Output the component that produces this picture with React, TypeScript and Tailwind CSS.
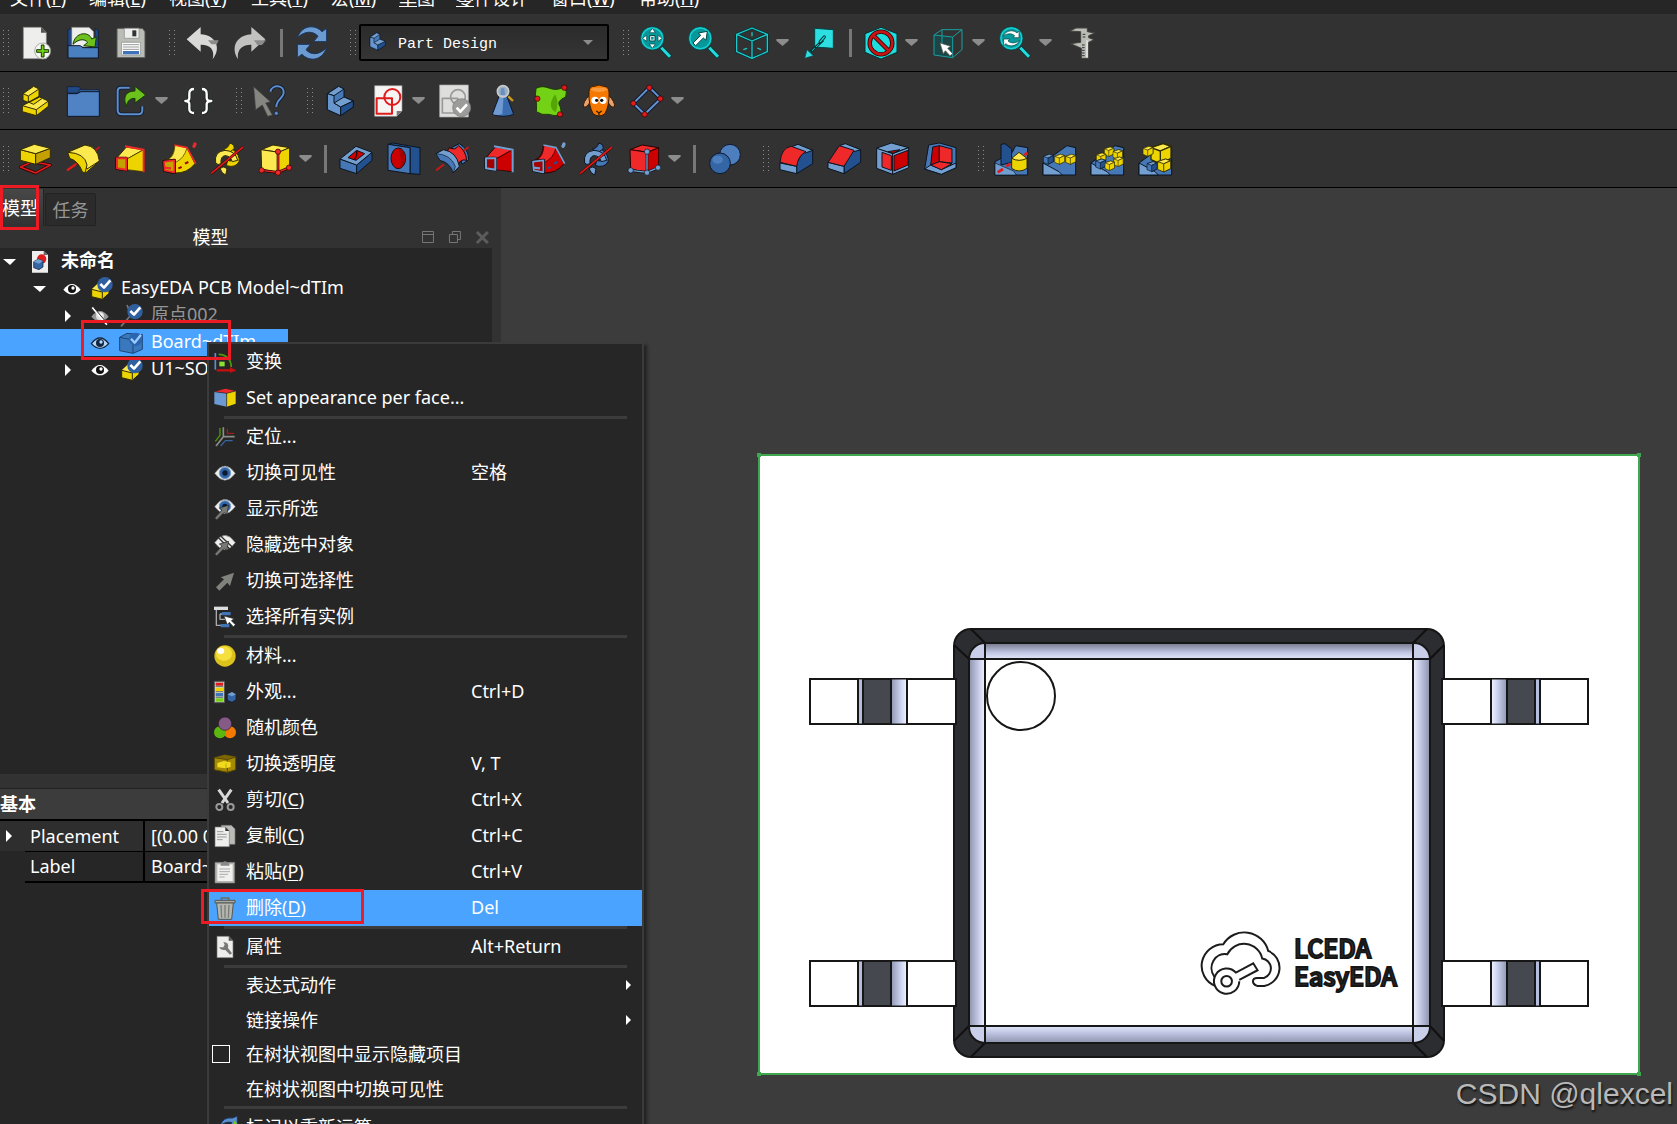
import type { ReactNode } from "react";
import clsx from "clsx";

const INK = "#10182a";
const BLUE = { light: "#729fcf", mid: "#4678b8", dark: "#23508f", ink: "#0b1521" };
const YELLOW = { light: "#fce94f", mid: "#edd400", dark: "#c4a000", ink: "#302b00" };
const RED = { light: "#ef2929", mid: "#cc0000", dark: "#a40000", ink: "#280000" };

type Tone = typeof BLUE;

/* ---------- toolbar icons, drawn on a 96 unit grid ---------- */

function Icon({ children }: { children: ReactNode }) {
  return (
    <svg viewBox="0 0 96 96" className="size-8 overflow-visible" aria-hidden="true">
      <g strokeLinejoin="round">{children}</g>
    </svg>
  );
}

function IconNew() {
  return (
    <Icon>
      <path d="M13 1H66L82 17V95H13Z" fill="#eeeeec" stroke="#888a85" strokeWidth="2" />
      <path d="M66 1L82 17H66Z" fill="#555" />
      <circle cx="71" cy="72" r="24" fill="#f4f4f2" stroke="#888a85" strokeWidth="2" />
      <path d="M67 54H75V68H89V76H75V90H67V76H53V68H67Z" fill="#73d216" stroke="#173a02" strokeWidth="3" />
    </Icon>
  );
}

function IconOpen() {
  return (
    <Icon>
      <path d="M3 8L14 4V50H84V4L94 10V92H3Z" fill="#204a87" stroke={INK} strokeWidth="2" />
      <path d="M14 1H66L80 14V60H14Z" fill="#eeeeec" stroke="#777" strokeWidth="2" />
      <path d="M3 56H40L48 62H94V93H3Z" fill="#4a7fc0" stroke={INK} strokeWidth="3" />
      <path d="M18 52C24 14 66 12 74 36L88 30L84 60L50 56L62 46C52 34 34 36 18 52Z" fill="#6cc11c" stroke="#173a02" strokeWidth="3" />
    </Icon>
  );
}

function IconSave() {
  return (
    <Icon>
      <path d="M9 4H82L90 14V92H6V7Z" fill="#babdb6" stroke="#555753" strokeWidth="3" />
      <path d="M28 4H72V34H28Z" fill="#eee" stroke="#888" strokeWidth="2" />
      <path d="M52 10H64V28H52Z" fill="#333" />
      <path d="M20 46H76V84H20Z" fill="#fff" stroke="#888" strokeWidth="2" />
      <path d="M24 53H72M24 60H72M24 67H72" stroke="#999" strokeWidth="3" />
      <path d="M24 72H72V82H24Z" fill="#3f72b8" />
    </Icon>
  );
}

function IconUndo() {
  return (
    <Icon>
      <path d="M2 37L44 0V22C88 24 108 62 80 97C88 66 70 52 44 53V74Z" fill="#d9dad7" />
      <path d="M66 40H98L92 52H76Z" fill="#8b8b8b" />
    </Icon>
  );
}

function IconRedo() {
  return (
    <Icon>
      <path d="M94 37L52 0V22C8 24 -12 62 12 97C8 66 26 52 52 53V74Z" fill="#c2c3c0" />
      <path d="M60 40H96L84 54H70Z" fill="#8b8b8b" />
    </Icon>
  );
}

function IconRefresh() {
  return (
    <Icon>
      <g fill="#6c9bd2" stroke="#17365f" strokeWidth="3">
        <path d="M4 32C20 -10 60 -6 78 14L92 4V44H52L66 28C52 12 28 10 4 32Z" />
        <path d="M92 62C76 106 36 102 18 82L4 92V52H44L30 68C44 84 68 86 92 62Z" />
      </g>
    </Icon>
  );
}

function Lens({ children }: { children: ReactNode }) {
  return (
    <Icon>
      <path d="M64 62L91 90" stroke="#033" strokeWidth="14" />
      <path d="M64 62L90 89" stroke="#1fdcde" strokeWidth="9" />
      <circle cx="37" cy="34" r="32" fill="#06989a" stroke="#16d0d2" strokeWidth="6" />
      <circle cx="37" cy="34" r="35" fill="none" stroke="#033" strokeWidth="2" />
      {children}
    </Icon>
  );
}

function IconZoomFit() {
  return (
    <Lens>
      <path d="M37 4L46 17H28ZM37 64L46 51H28ZM7 34L20 25V43ZM67 34L54 25V43Z" fill="#fff" stroke="#044" strokeWidth="2" />
      <path d="M29 26H45V42H29Z" fill="#fff" stroke="#044" strokeWidth="3" />
      <path d="M33 30H41V38H33Z" fill="#06989a" />
    </Lens>
  );
}

function IconZoomSelection() {
  return (
    <Lens>
      <path d="M58 13L54 40L46 33L23 56L15 48L38 25L31 18Z" fill="#fff" stroke="#044" strokeWidth="3" />
    </Lens>
  );
}

function IconZoomView() {
  return (
    <Lens>
      <path d="M12 28C22 8 44 8 54 18L60 12V32H42L47 26C38 18 24 18 12 28Z" fill="#fff" stroke="#044" strokeWidth="2" />
      <path d="M62 40C52 60 30 60 20 50L14 56V36H32L27 42C36 50 50 50 62 40Z" fill="#fff" stroke="#044" strokeWidth="2" />
    </Lens>
  );
}

function IconIsoCube() {
  return (
    <Icon>
      <g fill="none" stroke="#033" strokeWidth="8">
        <path d="M48 3L94 22V74L48 94L2 74V22ZM2 22L48 42L94 22M48 42V94" />
      </g>
      <g fill="none" stroke="#1cc8ca" strokeWidth="4">
        <path d="M48 3L94 22V74L48 94L2 74V22ZM2 22L48 42L94 22M48 42V94" />
        <path d="M48 16V28M22 68L33 64M64 63L75 68" />
      </g>
    </Icon>
  );
}

function IconAlign() {
  return (
    <Icon>
      <path d="M35 4L91 8V64L35 60Z" fill="#2ddfe1" stroke="#044" strokeWidth="3" />
      <path d="M60 40L22 76" stroke="#033" strokeWidth="8" />
      <path d="M60 40L22 76" stroke="#16d0d2" strokeWidth="3" strokeDasharray="12 5" />
      <path d="M5 94L12 68L31 86Z" fill="#2ddfe1" stroke="#044" strokeWidth="2" />
      <path d="M52 44L64 30" stroke="#033" strokeWidth="10" strokeLinecap="round" />
      <path d="M52 44L64 30" stroke="#16d0d2" strokeWidth="4" strokeLinecap="round" />
    </Icon>
  );
}

function IconDrawStyle() {
  return (
    <Icon>
      <path d="M48 1L96 20V76L48 96L0 76V20Z" fill="#1fdcde" stroke="#033" strokeWidth="3" />
      <circle cx="48" cy="48" r="34" fill="none" stroke="#2a0000" strokeWidth="13" />
      <path d="M24 24L72 72" stroke="#2a0000" strokeWidth="13" />
      <circle cx="48" cy="48" r="34" fill="none" stroke="#c81414" strokeWidth="8" />
      <path d="M24 24L72 72" stroke="#c81414" strokeWidth="8" />
    </Icon>
  );
}

function IconBoxSelect() {
  return (
    <Icon>
      <path d="M6 24L62 30V92L6 84Z" fill="#1e4546" />
      <path d="M6 24L62 30L90 8M62 30V92M6 24L30 8H90V68L62 92L6 84ZM30 8V62" fill="none" stroke="#189fa1" strokeWidth="3" />
      <path d="M24 48L56 58L47 64L62 80L54 86L40 71L34 80Z" fill="#fff" stroke="#555" strokeWidth="2" />
    </Icon>
  );
}

function IconCaliper() {
  return (
    <Icon>
      <path d="M12 12L30 3H64V14L86 18L68 26V32L84 38L68 46V94H46V64L14 50L44 46V14Z" fill="#babdb6" stroke="#42423f" strokeWidth="3" />
      <path d="M50 22H58M50 30H58M48 54H56M48 62H56M48 70H56M48 78H56M48 86H56" stroke="#333" strokeWidth="3" />
      <path d="M63 40V92" stroke="#fff" strokeWidth="3" />
    </Icon>
  );
}

function IconPart() {
  return (
    <Icon>
      <g stroke={YELLOW.ink} strokeWidth="3">
        <path d="M12 26L44 4L60 12L60 34L28 52L12 46Z" fill={YELLOW.mid} />
        <path d="M12 26L44 4L60 12L28 33Z" fill={YELLOW.light} />
        <path d="M28 33V52" />
        <path d="M10 62L62 36L88 48V64L52 92L10 80Z" fill={YELLOW.mid} />
        <path d="M10 62L30 52L44 58L70 40L88 48L52 74Z" fill={YELLOW.light} />
        <path d="M52 74V92" />
      </g>
    </Icon>
  );
}

function IconGroup() {
  return (
    <Icon>
      <path d="M1 5H36L42 12V24H1Z" fill="#204a87" stroke={INK} strokeWidth="2" />
      <path d="M36 14H96V26H36Z" fill="#35619f" stroke={INK} strokeWidth="2" />
      <path d="M1 26H30L42 20H97V94H1Z" fill="#4f83c4" stroke={INK} strokeWidth="3" />
    </Icon>
  );
}

function IconLink() {
  return (
    <Icon>
      <path d="M44 8H18Q8 8 8 18V76Q8 88 20 88H70Q82 88 82 76V64" fill="none" stroke={INK} strokeWidth="11" />
      <path d="M44 8H18Q8 8 8 18V76Q8 88 20 88H70Q82 88 82 76V64" fill="none" stroke="#5d8fce" strokeWidth="6" />
      <path d="M34 64C22 34 34 18 60 18V4L92 30L60 54V40C46 40 38 46 34 64Z" fill="#6cc11c" stroke="#173a02" strokeWidth="3" />
    </Icon>
  );
}

function IconVarSet() {
  return (
    <Icon>
      <g fill="none" stroke="#1c2624" strokeWidth="12">
        <path d="M36 12Q22 12 22 26V38Q22 48 10 48Q22 48 22 58V72Q22 84 36 84" />
        <path d="M60 12Q74 12 74 26V38Q74 48 88 48Q74 48 74 58V72Q74 84 60 84" />
      </g>
      <g fill="none" stroke="#fff" strokeWidth="7">
        <path d="M36 12Q22 12 22 26V38Q22 48 10 48Q22 48 22 58V72Q22 84 36 84" />
        <path d="M60 12Q74 12 74 26V38Q74 48 88 48Q74 48 74 58V72Q74 84 60 84" />
      </g>
    </Icon>
  );
}

function IconWhatsThis() {
  return (
    <Icon>
      <path d="M2 5L52 50L38 54L58 90L44 94L28 60L8 74Z" fill="#85867f" stroke="#444" strokeWidth="2" />
      <path d="M52 20C58 -4 94 0 92 24C90 42 70 42 70 66" fill="none" stroke={INK} strokeWidth="11" />
      <path d="M52 20C58 -4 94 0 92 24C90 42 70 42 70 66" fill="none" stroke="#5d8fce" strokeWidth="6" />
      <circle cx="70" cy="85" r="6" fill="#5d8fce" stroke={INK} strokeWidth="2" />
    </Icon>
  );
}

function BodyShape() {
  return (
    <g stroke={BLUE.ink} strokeWidth="3">
      <path d="M10 26L44 4L60 12V36L88 48V66L50 92L10 74Z" fill={BLUE.mid} />
      <path d="M10 26L44 4L60 12L30 32Z" fill={BLUE.light} />
      <path d="M10 26L30 32V54L50 66V92L10 74Z" fill="#6795cd" />
      <path d="M30 54L60 36L88 48L50 66Z" fill={BLUE.light} />
      <path d="M50 66L88 48V66L50 92Z" fill={BLUE.dark} />
    </g>
  );
}

function IconBody() {
  return (
    <Icon>
      <BodyShape />
    </Icon>
  );
}

function IconSketch() {
  return (
    <Icon>
      <path d="M8 2H90V78L74 94H8Z" fill="#f5f5f3" stroke="#999" strokeWidth="2" />
      <path d="M90 78H74V94Z" fill="#777" />
      <path d="M14 40H60V86H14Z" fill="none" stroke="#e01b1b" strokeWidth="6" />
      <circle cx="61" cy="36" r="24" fill="none" stroke="#e01b1b" strokeWidth="6" />
    </Icon>
  );
}

function IconSketchCheck() {
  return (
    <Icon>
      <path d="M2 0H88V96H2Z" fill="#dededc" stroke="#aaa" strokeWidth="2" />
      <path d="M10 40H56V84H10Z" fill="none" stroke="#999" strokeWidth="5" />
      <circle cx="57" cy="36" r="22" fill="none" stroke="#999" strokeWidth="5" />
      <circle cx="68" cy="68" r="27" fill="#9b9b99" stroke="#77777a" strokeWidth="2" />
      <path d="M53 68L64 80L84 58" fill="none" stroke="#fff" strokeWidth="8" />
    </Icon>
  );
}

function IconCheckGeometry() {
  return (
    <Icon>
      <path d="M40 24H56L80 88Q48 100 16 88Z" fill="#3a6cb0" stroke={INK} strokeWidth="3" />
      <path d="M40 30H50L46 88Q30 92 18 88Z" fill="#6f9bd2" />
      <path d="M64 34L78 48" stroke="#ce9a1a" strokeWidth="7" />
      <circle cx="48" cy="19" r="17" fill="#a4bdd6" fillOpacity="0.9" stroke="#c9cbc8" strokeWidth="5" />
      <path d="M42 10H52L54 30H40Z" fill="#6b8fc0" />
    </Icon>
  );
}

function IconShapeBinder() {
  return (
    <Icon>
      <path d="M3 10Q22 0 44 10Q66 18 88 6Q98 20 92 36Q62 48 76 66L80 88Q60 96 40 88Q22 92 4 80Q6 62 3 44Q0 28 3 10Z" fill="#73d216" stroke="#1b3a04" strokeWidth="3" />
      <path d="M60 28Q74 50 62 82Q34 66 60 28Z" fill="#4e9a06" fillOpacity="0.8" />
      <g fill="#e01b1b" stroke="#280000" strokeWidth="2">
        <circle cx="88" cy="8" r="8" />
        <circle cx="7" cy="41" r="8" />
        <circle cx="75" cy="88" r="8" />
      </g>
    </Icon>
  );
}

function IconClone() {
  return (
    <Icon>
      <path d="M20 30Q-2 52 2 66Q14 68 22 48ZM76 30Q98 52 94 66Q82 68 74 48Z" fill="#e9a36a" stroke="#3a1c00" strokeWidth="3" />
      <path d="M18 20Q20 2 34 4Q48 -4 62 4Q78 4 78 22Q80 60 66 86Q48 100 30 86Q16 60 18 20Z" fill="#f57900" stroke="#3a1c00" strokeWidth="3" />
      <path d="M22 14Q48 28 74 14L66 8H30Z" fill="#fb9a3c" />
      <circle cx="36" cy="46" r="11" fill="#fff" />
      <circle cx="60" cy="46" r="11" fill="#fff" />
      <circle cx="41" cy="46" r="5" fill="#111" />
      <circle cx="56" cy="46" r="5" fill="#111" />
      <path d="M40 78L48 84L56 78M48 84V92" fill="none" stroke="#3a1c00" strokeWidth="4" />
    </Icon>
  );
}

function IconDatum() {
  return (
    <Icon>
      <path d="M55 7L89 41L41 88L7 55Z" fill="none" stroke={INK} strokeWidth="12" />
      <path d="M55 7L89 41L41 88L7 55Z" fill="none" stroke="#6493cf" strokeWidth="6" />
      <g fill="#e01b1b" stroke="#280000" strokeWidth="2">
        <circle cx="55" cy="8" r="8" />
        <circle cx="88" cy="41" r="8" />
        <circle cx="41" cy="88" r="8" />
        <circle cx="7" cy="55" r="8" />
      </g>
    </Icon>
  );
}

function IconPad() {
  return (
    <Icon>
      <path d="M4 72L40 56L94 66L50 90Z" fill="none" stroke="#280000" strokeWidth="9" />
      <path d="M4 72L40 56L94 66L50 90Z" fill="none" stroke="#e01b1b" strokeWidth="5" />
      <g stroke={YELLOW.ink} strokeWidth="3">
        <path d="M4 20L50 32V64L4 52Z" fill={YELLOW.mid} />
        <path d="M50 32L94 16V44L50 64Z" fill={YELLOW.dark} />
        <path d="M4 20L46 4L94 16L50 32Z" fill={YELLOW.light} />
      </g>
    </Icon>
  );
}

function IconRevolution() {
  return (
    <Icon>
      <path d="M0 82L98 12" stroke="#c01818" strokeWidth="6" />
      <g stroke={YELLOW.ink} strokeWidth="3">
        <path d="M2 28L54 6Q92 10 97 54L56 90Z" fill={YELLOW.mid} />
        <path d="M2 28L54 6Q92 10 97 54L60 78Q50 34 2 28Z" fill={YELLOW.light} />
        <path d="M2 28Q54 30 60 66L54 90L46 86Q34 54 8 46Z" fill={YELLOW.mid} />
      </g>
      <path d="M0 82L26 64" stroke="#e01b1b" strokeWidth="6" />
    </Icon>
  );
}

function IconLoft({ body, line }: { body: Tone; line: Tone }) {
  return (
    <Icon>
      <path d="M32 12L86 20V86L32 76Z" fill={body.dark} stroke={line.ink} strokeWidth="3" />
      <path d="M6 44L34 12L86 20L36 48Z" fill={body.light} stroke={body.ink} strokeWidth="3" />
      <path d="M36 48L86 20V86L36 80Z" fill={body.mid} stroke={body.ink} strokeWidth="2" />
      <path d="M30 10L86 20V88" fill="none" stroke={line.light} strokeWidth="6" />
      <path d="M6 46H34V80L6 76Z" fill={body.dark} stroke={line.ink} strokeWidth="10" />
      <path d="M6 46H34V80L6 76Z" fill={body.dark} stroke={line.light} strokeWidth="6" />
    </Icon>
  );
}

function IconPipe({ body, line }: { body: Tone; line: Tone }) {
  return (
    <Icon>
      <path d="M8 52Q34 40 34 6L72 14L96 62Q72 92 36 90Z" fill={body.mid} stroke={body.ink} strokeWidth="3" />
      <path d="M16 50Q34 40 36 6L72 14Q64 46 38 58Z" fill={body.light} stroke={body.ink} strokeWidth="2" />
      <path d="M46 76L56 72M66 62L76 57" stroke={line.dark} strokeWidth="6" />
      <path d="M34 6L72 14L98 62" fill="none" stroke={line.light} strokeWidth="5" />
      <path d="M3 56L34 52V88L5 82Z" fill={body.dark} stroke={line.ink} strokeWidth="10" />
      <path d="M3 56L34 52V88L5 82Z" fill={body.dark} stroke={line.light} strokeWidth="5" />
      <path d="M4 74L24 76" stroke={line.light} strokeWidth="7" />
      <path d="M93 10L96 3" stroke={line.light} strokeWidth="10" strokeLinecap="round" />
    </Icon>
  );
}

function IconHelix({ body }: { body: Tone }) {
  return (
    <Icon>
      <path d="M38 18Q52 16 56 0Q74 4 68 22Q58 30 46 26Z" fill={body.mid} stroke={body.ink} strokeWidth="3" />
      <path d="M66 20Q88 36 84 56Q74 76 46 68L50 52Q64 58 70 46Q68 34 52 30Z" fill={body.mid} stroke={body.ink} strokeWidth="3" />
      <path d="M14 60Q8 26 42 22Q74 24 80 52L64 56Q58 38 42 38Q28 40 30 62Q20 68 14 60Z" fill={body.light} stroke={body.ink} strokeWidth="3" />
      <path d="M28 78Q32 92 44 96L48 78Q36 66 28 78Z" fill={body.light} stroke={body.ink} strokeWidth="3" />
      <path d="M0 92L96 12" stroke="#280000" strokeWidth="8" />
      <path d="M0 92L96 12" stroke="#e01b1b" strokeWidth="5" />
    </Icon>
  );
}

function IconPrimitive({ body, line }: { body: Tone; line: Tone }) {
  return (
    <Icon>
      <g stroke={body.ink} strokeWidth="3">
        <path d="M6 20L42 6L92 14L60 28Z" fill={body.light} />
        <path d="M6 20L60 28V90L8 78Z" fill={body.light} />
        <path d="M58 28L92 14V72L58 90Z" fill={body.mid} />
      </g>
      <path d="M57 28V88M8 82L57 88L90 74" fill="none" stroke={line.ink} strokeWidth="8" />
      <path d="M57 28V88M8 82L57 88L90 74" fill="none" stroke={line.light} strokeWidth="4" />
      <g fill={line.light} stroke={line.ink} strokeWidth="2">
        <circle cx="57" cy="26" r="8" />
        <circle cx="8" cy="82" r="8" />
        <circle cx="57" cy="89" r="8" />
        <circle cx="90" cy="74" r="8" />
      </g>
    </Icon>
  );
}

function IconPocket() {
  return (
    <Icon>
      <g stroke={BLUE.ink} strokeWidth="3">
        <path d="M0 48L50 66V92L0 76Z" fill={BLUE.mid} />
        <path d="M50 66L96 28V52L50 92Z" fill={BLUE.dark} />
        <path d="M0 48L48 10L96 28L50 66Z" fill={BLUE.light} />
        <path d="M24 44L50 22L74 32L48 52Z" fill={RED.mid} />
      </g>
      <path d="M50 24V36L44 50" fill="none" stroke={RED.ink} strokeWidth="4" />
    </Icon>
  );
}

function IconHole() {
  return (
    <Icon>
      <g stroke={BLUE.ink} strokeWidth="3">
        <path d="M0 4L14 0L96 14V94L66 92V14Z" fill={BLUE.dark} />
        <path d="M0 4L66 14V92L0 82Z" fill={BLUE.mid} />
        <ellipse cx="31" cy="46" rx="22" ry="31" fill={RED.mid} />
      </g>
      <path d="M30 16Q52 24 50 52Q46 72 36 76Q44 46 30 16Z" fill={RED.dark} />
    </Icon>
  );
}

function IconGroove() {
  return (
    <Icon>
      <path d="M46 14L70 2Q98 18 98 50L78 64Q76 34 46 14Z" fill={BLUE.mid} stroke={BLUE.ink} strokeWidth="3" />
      <path d="M40 14Q56 24 68 8Q90 24 92 52Q74 46 66 66Q58 34 34 24Z" fill={RED.light} stroke={RED.ink} strokeWidth="3" />
      <path d="M0 32L22 20Q62 26 70 70L52 90Q42 58 12 52Z" fill={BLUE.light} stroke={BLUE.ink} strokeWidth="3" />
      <path d="M0 32Q44 34 58 70L52 90Q42 58 12 52Z" fill={BLUE.mid} stroke={BLUE.ink} strokeWidth="2" />
      <path d="M0 82L24 64M84 22L98 12" stroke="#c01818" strokeWidth="6" />
    </Icon>
  );
}

function IconBoolean() {
  return (
    <Icon>
      <circle cx="63" cy="35" r="31" fill="#4d7fbf" stroke={INK} strokeWidth="3" />
      <circle cx="33" cy="61" r="31" fill="#3465a4" stroke={INK} strokeWidth="3" />
      <ellipse cx="26" cy="50" rx="16" ry="12" fill="#4d7fbf" />
    </Icon>
  );
}

function IconFillet() {
  return (
    <Icon>
      <g stroke={BLUE.ink} strokeWidth="3">
        <path d="M50 60L70 26L98 20V62L50 92Z" fill={BLUE.dark} />
        <path d="M32 12L54 4L98 22L76 30Z" fill={BLUE.light} />
        <path d="M0 60L50 70V92L0 80Z" fill={BLUE.light} />
        <path d="M0 58Q4 14 34 10L78 26Q54 38 50 70Z" fill={RED.light} />
      </g>
    </Icon>
  );
}

function IconChamfer() {
  return (
    <Icon>
      <g stroke={BLUE.ink} strokeWidth="3">
        <path d="M48 70L76 16L98 22V58L48 92Z" fill={BLUE.dark} />
        <path d="M34 8L52 2L98 20L78 26Z" fill={BLUE.light} />
        <path d="M0 58L48 70V92L0 76Z" fill={BLUE.light} />
        <path d="M0 58L34 8L78 22L48 70Z" fill={RED.light} />
      </g>
    </Icon>
  );
}

function IconDraft() {
  return (
    <Icon>
      <g stroke={BLUE.ink} strokeWidth="3">
        <path d="M0 16L46 0L98 14L50 32Z" fill={BLUE.light} />
        <path d="M2 16L50 32V94L2 76Z" fill={BLUE.light} />
        <path d="M50 32L98 14V74L50 94Z" fill={BLUE.light} />
        <path d="M18 28L46 38V82L18 72Z" fill={RED.light} />
        <path d="M54 38L96 22V66L54 84Z" fill={RED.mid} />
        <path d="M36 26L72 20L52 31Z" fill={RED.mid} />
      </g>
    </Icon>
  );
}

function IconThickness() {
  return (
    <Icon>
      <g stroke={BLUE.ink} strokeWidth="3">
        <path d="M14 6L46 0L96 14V74L52 94L2 78Z" fill={BLUE.mid} />
        <path d="M2 78L20 66L52 80L96 60V74L52 94Z" fill={BLUE.light} />
        <path d="M26 12L46 8V56L20 66Z" fill={RED.mid} />
        <path d="M46 8L84 18V60L46 56Z" fill={RED.light} />
        <path d="M20 66L46 56L84 62L52 80Z" fill={RED.light} />
      </g>
    </Icon>
  );
}

function Ramp() {
  return (
    <g stroke={BLUE.ink} strokeWidth="3">
      <path d="M0 60L72 8L98 14V96H0Z" fill={BLUE.mid} />
      <path d="M0 60L48 86L58 96H0Z" fill={BLUE.light} />
    </g>
  );
}

function MiniCube({ x, y, s, tone }: { x: number; y: number; s: number; tone: Tone }) {
  return (
    <g transform={`translate(${x} ${y}) scale(${s})`} stroke={tone.ink} strokeWidth="2">
      <path d="M0 6L18 0L30 4V22L14 30L0 24Z" fill={tone.mid} />
      <path d="M0 6L18 0L30 4L14 11Z" fill={tone.light} />
      <path d="M14 11L30 4V22L14 30Z" fill={tone.dark === YELLOW.dark ? tone.mid : tone.dark} />
    </g>
  );
}

function IconMirrored() {
  return (
    <Icon>
      <path d="M0 96V56L52 28L62 8L98 14V96Z" fill={BLUE.mid} stroke={BLUE.ink} strokeWidth="3" />
      <path d="M18 4L30 2L50 18V58L18 66Z" fill={BLUE.dark} stroke={BLUE.ink} strokeWidth="3" />
      <path d="M0 60L56 84L64 96H0Z" fill={BLUE.light} stroke={BLUE.ink} strokeWidth="2" />
      <path d="M8 88L24 78M34 70L46 62M88 36L98 30" stroke="#e01b1b" strokeWidth="8" />
      <g stroke={YELLOW.ink} strokeWidth="3">
        <path d="M50 46V76Q72 92 96 76V46Z" fill={YELLOW.mid} />
        <path d="M50 46L72 28L96 46Q72 58 50 46Z" fill={YELLOW.light} />
      </g>
    </Icon>
  );
}

function IconLinearPattern() {
  return (
    <Icon>
      <Ramp />
      <MiniCube x={1} y={34} s={1} tone={BLUE} />
      <MiniCube x={35} y={34} s={1} tone={YELLOW} />
      <MiniCube x={68} y={34} s={1} tone={YELLOW} />
    </Icon>
  );
}

function IconPolarPattern() {
  return (
    <Icon>
      <Ramp />
      <MiniCube x={40} y={12} s={0.95} tone={YELLOW} />
      <MiniCube x={66} y={20} s={0.95} tone={YELLOW} />
      <MiniCube x={16} y={30} s={0.95} tone={YELLOW} />
      <MiniCube x={68} y={42} s={0.95} tone={YELLOW} />
      <MiniCube x={14} y={48} s={1} tone={BLUE} />
      <MiniCube x={42} y={54} s={0.95} tone={YELLOW} />
    </Icon>
  );
}

function IconMultiTransform() {
  return (
    <Icon>
      <Ramp />
      <MiniCube x={36} y={2} s={2} tone={YELLOW} />
      <MiniCube x={12} y={10} s={1} tone={YELLOW} />
      <MiniCube x={24} y={56} s={1} tone={BLUE} />
      <MiniCube x={56} y={48} s={1.3} tone={YELLOW} />
    </Icon>
  );
}

/* ---------- toolbar pieces ---------- */

function Grip({ first }: { first?: boolean }) {
  return (
    <svg viewBox="0 0 7 26" className={clsx("h-[26px] w-[7px] shrink-0", first ? "ml-[3px] mr-px" : "ml-[14px] mr-0.5")} aria-hidden="true">
      {[0, 4, 8, 12, 16, 20, 24].map((y) => (
        <path key={y} d={`M0 ${y}h1v1h-1zM5 ${y}h1v1h-1z`} fill="#8a8a8a" />
      ))}
    </svg>
  );
}

function Divider() {
  return <div className="w-[14px] shrink-0 flex justify-center"><div className="w-[3px] h-7 bg-[#777]" /></div>;
}

function Tool({ name, children }: { name: string; children: ReactNode }) {
  return <button type="button" aria-label={name} className="w-12 h-full shrink-0 flex items-center justify-center">{children}</button>;
}

function More({ name }: { name: string }) {
  return (
    <button type="button" aria-label={name} className="w-[19px] h-full shrink-0 flex items-center">
      <svg viewBox="0 0 14 8" className="w-[13px] h-[7px]" aria-hidden="true"><path d="M0 0H14V2L7 8L0 2Z" fill="#8c8c8c" /></svg>
    </button>
  );
}

function Toolbar({ children }: { children: ReactNode }) {
  return <div role="toolbar" className="h-[58px] shrink-0 flex items-center bg-[#323232] border-b border-black">{children}</div>;
}

/* ---------- tree and menu icons, 66 unit grid ---------- */

function Small({ children }: { children?: ReactNode }) {
  return <svg viewBox="0 0 66 66" className="size-[22px] shrink-0 overflow-visible" aria-hidden="true"><g strokeLinejoin="round">{children}</g></svg>;
}

function TreeEye({ hidden, selected }: { hidden?: boolean; selected?: boolean }) {
  const shade = selected ? "#b4d6fb" : "#fff";
  return (
    <svg viewBox="0 0 54 36" className="w-[18px] h-3 shrink-0 overflow-visible" aria-hidden="true">
      <path d="M1 20Q27 -14 53 20Q27 48 1 20Z" fill={hidden ? "#999" : shade} stroke={selected ? "#12263e" : "none"} strokeWidth="4" />
      <circle cx="27" cy="18" r="12" fill={hidden ? "#ddd" : selected ? "#12263e" : "#111"} />
      <circle cx="30" cy="15" r="5" fill={shade} />
      {hidden && <path d="M4 -8L48 44" stroke="#fff" strokeWidth="6" />}
      {hidden && <path d="M8 -8L52 44" stroke="#333" strokeWidth="3" />}
    </svg>
  );
}

function Check() {
  return (
    <>
      <circle cx="42" cy="20" r="23" fill="#2f5f9f" />
      <path d="M28 18L39 29L58 7" fill="none" stroke="#fff" strokeWidth="8" />
    </>
  );
}

function TreeArrow({ open }: { open?: boolean }) {
  return (
    <svg viewBox="0 0 14 14" className="size-[14px] shrink-0" aria-hidden="true">
      <path d={open ? "M0 4H13L7 10Z" : "M4 1L10 7L4 13Z"} fill="#fff" />
    </svg>
  );
}

function TreeLabel({ children }: { children: ReactNode }) {
  return <span className="ml-2 pb-0.5">{children}</span>;
}

function TreePart() {
  return (
    <Small>
      <path d="M2 34L28 10L54 20V46L34 64L2 56Z" fill={YELLOW.mid} stroke={YELLOW.ink} strokeWidth="3" />
      <path d="M2 34L28 10L54 26L34 42Z" fill={YELLOW.light} />
      <path d="M2 34L34 42L54 26M34 42V62" fill="none" stroke={YELLOW.ink} strokeWidth="3" />
      <Check />
    </Small>
  );
}

function Eye({ hidden }: { hidden?: boolean }) {
  return (
    <>
      <path d="M2 34Q33 -10 64 34Q33 76 2 34Z" fill="#eeeeec" stroke="#777" strokeWidth="2" />
      {hidden ? <path d="M12 18L48 54M20 14L54 46" stroke="#333" strokeWidth="4" /> : <circle cx="33" cy="33" r="17" fill="#3465a4" stroke="#729fcf" strokeWidth="3" />}
      {!hidden && <circle cx="33" cy="33" r="8" fill="#0b1a30" />}
    </>
  );
}

const arrowPath = "M2 60L24 36L16 30L44 22L38 50L31 43L8 66Z";

const menuIcons: Record<string, ReactNode> = {
  transform: (
    <Small>
      <path d="M4 6V56" stroke="#5d8fce" strokeWidth="5" />
      <path d="M14 10Q50 12 52 48" fill="none" stroke="#4e9a06" strokeWidth="5" />
      <path d="M16 32H32V46H16Z" fill="#8ae234" />
      <path d="M8 58H64" stroke="#c01010" strokeWidth="7" />
      <path d="M48 48L64 58L48 66Z" fill="#c01010" />
    </Small>
  ),
  faces: (
    <Small>
      <path d="M1 14L34 5L65 12L38 19Z" fill="#ef2929" />
      <path d="M1 14L38 19V59L1 51Z" fill="#6c9ad2" />
      <path d="M38 19L65 12V50L38 59Z" fill="#edd400" />
      <path d="M1 14L38 19L65 12M38 19V59" fill="none" stroke="#222" strokeWidth="2" />
    </Small>
  ),
  placement: (
    <Small>
      <path d="M28 4V32L6 60M28 32H62" fill="none" stroke="#8c8c88" strokeWidth="5" />
      <path d="M18 6V28L4 46" fill="none" stroke="#4e9a06" strokeWidth="4" />
      <path d="M40 8V22H60" fill="none" stroke="#a41a1a" strokeWidth="4" />
      <path d="M20 60L34 44H56" fill="none" stroke="#3465a4" strokeWidth="4" />
    </Small>
  ),
  eye: <Small><Eye /></Small>,
  showSel: <Small><g transform="translate(0 -8)"><Eye /></g><path d={arrowPath} fill="#777974" stroke="#222" strokeWidth="2" /></Small>,
  hideSel: <Small><g transform="translate(0 -8)"><Eye hidden /></g><path d={arrowPath} fill="#777974" stroke="#222" strokeWidth="2" /></Small>,
  selectable: <Small><path d="M6 52L30 28L20 22L60 8L48 48L40 38L16 62Z" fill="#80827c" /></Small>,
  instances: (
    <Small>
      <path d="M0 2H42V12H0Z" fill="#ddd" />
      <path d="M7 12V58H24M18 24V40H34M18 24H24" fill="none" stroke="#aaa" strokeWidth="4" />
      <path d="M24 18H50V28H24ZM20 54H46V64H20Z" fill="#3f74b8" />
      <path d="M30 30L60 38L52 44L64 56L58 62L46 49L40 56Z" fill="#fff" stroke="#333" strokeWidth="2" />
    </Small>
  ),
  material: (
    <Small>
      <circle cx="33" cy="33" r="32" fill="#dcc21c" />
      <ellipse cx="30" cy="26" rx="24" ry="22" fill="#f5e03e" />
      <ellipse cx="20" cy="18" rx="11" ry="9" fill="#fff" />
    </Small>
  ),
  appearance: (
    <Small>
      <path d="M1 1H31V65H1Z" fill="#d3d7cf" stroke="#555" strokeWidth="3" />
      <path d="M5 5H27V14H5Z" fill="#e01b1b" />
      <path d="M5 20H27V30H5Z" fill="#edd400" />
      <path d="M5 36H27V46H5Z" fill="#3f74b8" />
      <path d="M5 52H27V62H5Z" fill="#73d216" />
      <path d="M5 16H27M5 32H27M5 49H27" stroke="#333" strokeWidth="2" />
      <path d="M40 40L54 33L66 40V56L54 64L40 58Z" fill="#3465a4" stroke={INK} strokeWidth="2" />
      <path d="M40 40L54 33L66 40L54 46Z" fill="#729fcf" />
    </Small>
  ),
  random: (
    <Small>
      <circle cx="48" cy="46" r="18" fill="#f57900" />
      <circle cx="18" cy="46" r="18" fill="#5cb80e" />
      <circle cx="33" cy="20" r="20" fill="#855a86" stroke="#2a1a2c" strokeWidth="2" />
    </Small>
  ),
  transparency: (
    <Small>
      <path d="M1 14L32 6L65 12V50L40 58L1 50Z" fill="#a58a08" stroke="#5a4a00" strokeWidth="3" />
      <path d="M1 14L32 6L65 12L40 20Z" fill="#7d6600" />
      <path d="M1 14L40 20L65 12M40 20V58" fill="none" stroke="#5a4a00" strokeWidth="3" />
      <path d="M10 30L30 24L50 28V42L36 46L10 43Z" fill="#f2da1c" />
      <path d="M36 32V46" stroke="#a58a08" strokeWidth="2" />
    </Small>
  ),
  cut: (
    <Small>
      <path d="M14 2L42 42M52 2L24 42" stroke="#d8d8d6" strokeWidth="9" />
      <circle cx="16" cy="54" r="9" fill="none" stroke="#999" strokeWidth="6" />
      <circle cx="50" cy="54" r="9" fill="none" stroke="#999" strokeWidth="6" />
    </Small>
  ),
  copy: (
    <Small>
      <path d="M22 1H52L63 12V58H22Z" fill="#b9bbb6" stroke="#777" strokeWidth="2" />
      <path d="M3 6H34L46 18V65H3Z" fill="#eeeeec" stroke="#777" strokeWidth="2" />
      <path d="M34 6V18H46Z" fill="#333" />
      <path d="M9 20H28M9 28H38M9 36H38M9 44H26" stroke="#999" strokeWidth="3" />
    </Small>
  ),
  paste: (
    <Small>
      <path d="M3 4H62V66H3Z" fill="#b4b6b1" stroke="#777" strokeWidth="2" />
      <path d="M10 10H56V60H10Z" fill="#f0f0ee" />
      <path d="M20 8L33 0L46 8V14H20Z" fill="#888" />
      <path d="M16 24H48M16 32H48M16 40H42M16 48H32" stroke="#aaa" strokeWidth="3" />
    </Small>
  ),
  trash: (
    <Small>
      <path d="M22 10V3H44V10" fill="none" stroke="#6a6c66" strokeWidth="5" />
      <path d="M3 10H63V18H3Z" fill="#a9aba5" stroke="#555753" strokeWidth="3" />
      <path d="M8 18H58L53 67H13Z" fill="#b4b6b0" stroke="#555753" strokeWidth="3" />
      <path d="M21 24L23 62M33 24V62M45 24L43 62" stroke="#7a7c76" strokeWidth="4" />
    </Small>
  ),
  props: (
    <Small>
      <path d="M9 1H44L57 14V65H9Z" fill="#eeeeec" stroke="#777" strokeWidth="2" />
      <path d="M44 1V14H57Z" fill="#555" />
      <path d="M28 18Q46 18 42 36L54 52L48 56L34 42Q20 44 16 34L28 34L32 26Z" fill="#777974" />
    </Small>
  ),
  recompute: (
    <Small>
      <path d="M6 30Q14 2 44 6L58 0V30H32L42 20Q24 14 6 30Z" fill="#5d8fce" stroke="#17365f" strokeWidth="3" />
      <path d="M22 34Q34 22 48 24V14L64 30L48 48V36Q34 34 22 48Z" fill="#73d216" />
    </Small>
  ),
};

interface MenuEntry {
  label?: string;
  hotkey?: string;
  shortcut?: string;
  icon?: string;
  active?: boolean;
}

const contextMenu: MenuEntry[] = [
  { label: "变换", icon: "transform" },
  { label: "Set appearance per face...", icon: "faces" },
  {},
  { label: "定位...", icon: "placement" },
  { label: "切换可见性", icon: "eye", shortcut: "空格" },
  { label: "显示所选", icon: "showSel" },
  { label: "隐藏选中对象", icon: "hideSel" },
  { label: "切换可选择性", icon: "selectable" },
  { label: "选择所有实例", icon: "instances" },
  {},
  { label: "材料...", icon: "material" },
  { label: "外观...", icon: "appearance", shortcut: "Ctrl+D" },
  { label: "随机颜色", icon: "random" },
  { label: "切换透明度", icon: "transparency", shortcut: "V, T" },
  { label: "剪切", hotkey: "C", icon: "cut", shortcut: "Ctrl+X" },
  { label: "复制", hotkey: "C", icon: "copy", shortcut: "Ctrl+C" },
  { label: "粘贴", hotkey: "P", icon: "paste", shortcut: "Ctrl+V" },
  { label: "删除", hotkey: "D", icon: "trash", shortcut: "Del", active: true },
  {},
  { label: "属性", icon: "props", shortcut: "Alt+Return" },
  {},
];

function MenuSeparator() {
  return <div className="h-[3px] ml-[15px] mr-[15px] bg-[#3c3c3c]" />;
}

function SubmenuItem({ label }: { label: string }) {
  return (
    <button type="button" role="menuitem" className="w-full flex-1 flex items-center pl-[37px] pr-[11px] text-left">
      <span className="flex-1">{label}</span>
      <svg viewBox="0 0 5 10" className="w-[5px] h-2.5" aria-hidden="true"><path d="M0 0L5 5L0 10Z" fill="#fff" /></svg>
    </button>
  );
}

function ContextMenu() {
  return (
    <div role="menu" className="absolute left-[207px] top-[342px] w-[437px] border-2 border-[#3b3b3b] bg-[#262626] shadow-[3px_3px_3px_#222] text-white">
      {contextMenu.map((entry, i) =>
        entry.label ? (
          <button
            type="button"
            role="menuitem"
            key={i}
            className={clsx("relative w-full h-9 flex items-center pl-[5px] text-left", entry.active && "bg-[#4aa3ff]")}
          >
            {menuIcons[entry.icon!]}
            <span className="w-[225px] ml-2.5 pb-0.5 shrink-0 whitespace-nowrap">
              {entry.label}
              {entry.hotkey && <>(<span className="underline underline-offset-2">{entry.hotkey}</span>)</>}
            </span>
            <span className="pb-0.5">{entry.shortcut}</span>
            {entry.active && <span className="absolute -left-2 -top-px w-[163px] h-[35px] border-3 border-[#ed1c24]" />}
          </button>
        ) : (
          <MenuSeparator key={i} />
        ),
      )}
      <div className="h-[138px] flex flex-col">
        <SubmenuItem label="表达式动作" />
        <SubmenuItem label="链接操作" />
        <label className="flex-1 flex items-center pl-[3px]">
          <input type="checkbox" className="appearance-none size-[18px] border border-white mr-4" />
          在树状视图中显示隐藏项目
        </label>
        <button type="button" role="menuitem" className="flex-1 pl-[37px] text-left">在树状视图中切换可见性</button>
      </div>
      <MenuSeparator />
      <button type="button" role="menuitem" className="w-full h-9 flex items-center pl-[9px] text-left">
        {menuIcons.recompute}
        <span className="ml-1.5">标记以重新运算</span>
      </button>
    </div>
  );
}

const mainMenu = [
  { label: "文件", hotkey: "F", width: "w-[79px]" },
  { label: "编辑", hotkey: "E", width: "w-[80px]" },
  { label: "视图", hotkey: "V", width: "w-[82px]" },
  { label: "工具", hotkey: "T", width: "w-[80px]" },
  { label: "宏", hotkey: "M", width: "w-[68px]" },
  { label: "草图", width: "w-[57px]" },
  { label: "零件设计", width: "w-[95px]" },
  { label: "窗口", hotkey: "W", width: "w-[88px]" },
  { label: "帮助", hotkey: "H", width: "w-[80px]" },
];

function MenuBar() {
  return (
    <nav className="h-3.5 shrink-0 overflow-hidden bg-[#262626] flex items-end pl-2.5 pb-1 text-white">
      {mainMenu.map((item) => (
        <button type="button" key={item.label} className={clsx("shrink-0 h-6 leading-6 text-left whitespace-nowrap", item.width)}>
          {item.hotkey ? (
            <>{item.label}(<u>{item.hotkey}</u>)</>
          ) : (
            <><u>{item.label[0]}</u>{item.label.slice(1)}</>
          )}
        </button>
      ))}
    </nav>
  );
}

function ModelPanel() {
  return (
    <aside className="w-[501px] shrink-0 bg-[#323232] flex flex-col">
      <div role="tablist" className="h-[39px] shrink-0 flex items-start pt-px">
        <button type="button" role="tab" aria-selected="true" className="w-11 h-[37px] pl-0.5 text-left whitespace-nowrap text-white bg-linear-to-b from-[#484848] to-[#323232] border-r border-[#222]">模型</button>
        <button type="button" role="tab" aria-selected="false" className="w-[51px] h-[33px] ml-px mt-1 border border-[#222] rounded-t-xs bg-[#2b2b2b] text-[#969696]">任务</button>
      </div>
      <div className="h-[21px] pb-0.5 shrink-0 flex items-center pr-2.5 text-white">
        <span className="w-[422px] text-center leading-5">模型</span>
        <svg viewBox="0 0 70 14" className="w-[70px] h-3.5 ml-auto" fill="none" stroke="#777" aria-hidden="true">
          <path d="M1.500 1.500h11v11h-11zM1.500 4.500h11M31.500 4.500v-3h8v8h-3M28.500 4.500h8v8h-8z" />
          <path d="M56 2L67 13M67 2L56 13" strokeWidth="3" stroke="#5c5c5c" />
        </svg>
      </div>

      <ul role="tree" className="w-[492px] h-[526px] shrink-0 bg-[#262626] text-white leading-[25px] [&>li]:h-[27px] [&>li]:flex [&>li]:items-center [&>li]:whitespace-nowrap">
        <li role="treeitem" className="pl-[3px] font-bold">
          <TreeArrow open />
          <span className="ml-3 flex">
            <Small>
              <path d="M9 0H44L57 12V65H9Z" fill="#eeeeec" />
              <path d="M44 0V12H57Z" fill="#666" />
              <circle cx="38" cy="24" r="14" fill="#e01b1b" />
              <path d="M14 32L28 24L42 30V48L30 56L14 50Z" fill="#3465a4" stroke={INK} strokeWidth="2" />
              <path d="M14 32L28 24L42 30L30 38Z" fill="#729fcf" />
            </Small>
          </span>
          <span className="ml-2.5 pb-0.5">未命名</span>
        </li>
        <li role="treeitem" className="pl-[33px]">
          <TreeArrow open />
          <span className="ml-4 mr-2.5 flex"><TreeEye /></span>
          <TreePart />
          <TreeLabel>EasyEDA PCB Model~dTIm</TreeLabel>
        </li>
        <li role="treeitem" className="pl-[61px] text-[#969696]">
          <TreeArrow />
          <span className="ml-4 mr-3 flex"><TreeEye hidden /></span>
          <Small>
            <path d="M0 64L30 30L18 0" fill="none" stroke="#777" strokeWidth="5" />
            <Check />
          </Small>
          <TreeLabel>原点002</TreeLabel>
        </li>
        <li role="treeitem" aria-selected="true" className="pl-[91px] w-[288px] bg-[#4aa3ff]">
          <TreeEye selected />
          <span className="ml-3 flex">
            <Small>
              <path d="M-4 16L18 4L64 8V52L36 64L-4 56Z" fill="#3a78bd" stroke="#1c4677" strokeWidth="3" />
              <path d="M-4 16L36 24V64M36 24L64 8" fill="none" stroke="#1c4677" strokeWidth="3" />
              <circle cx="44" cy="22" r="20" fill="#2a66ae" />
              <path d="M30 20L41 32L60 8" fill="none" stroke="#9ccbff" strokeWidth="7" />
            </Small>
          </span>
          <TreeLabel>Board~dTIm</TreeLabel>
        </li>
        <li role="treeitem" className="pl-[61px]">
          <TreeArrow />
          <span className="ml-4 mr-3 flex"><TreeEye /></span>
          <TreePart />
          <TreeLabel>U1~SOP</TreeLabel>
        </li>
      </ul>

      <div className="mt-3.5 flex-1 w-[492px] bg-[#262626] border-t border-[#222] text-white">
        <table className="w-full border-collapse table-fixed">
          <colgroup><col className="w-[25px]" /><col className="w-[119px]" /><col /></colgroup>
          <thead>
            <tr className="h-[31px] bg-[#3c3c3c] border-b-2 border-black">
              <th colSpan={3} className="p-0 text-left font-bold leading-[28px]">基本</th>
            </tr>
          </thead>
          <tbody>
            <tr className="h-[31px] bg-[#2e2e2e]">
              <td className="p-0 pl-0.5"><TreeArrow /></td>
              <td className="p-0 pl-[5px] border-b border-r-2 border-black leading-[28px]">Placement</td>
              <td className="p-0 pl-1.5 border-b border-black leading-[28px] whitespace-nowrap">[(0.00 0.00)]</td>
            </tr>
            <tr className="h-[31px]">
              <td />
              <td className="p-0 pl-[5px] border-b-2 border-r-2 border-black leading-[28px]">Label</td>
              <td className="p-0 pl-1.5 border-b-2 border-black leading-[28px]">Board~dTIm</td>
            </tr>
          </tbody>
        </table>
      </div>
    </aside>
  );
}

/* ---------- 3D view ---------- */

function Lead({ x, y, flip }: { x: number; y: number; flip?: boolean }) {
  return (
    <g transform={flip ? `translate(${x + 146} ${y}) scale(-1 1)` : `translate(${x} ${y})`} stroke="#161616" strokeWidth="2">
      <path d="M0 0H146V45H0Z" fill="#fff" />
      <path d="M48 0H53V45H48Z" fill="#b5bddc" strokeWidth="1" />
      <path d="M81 0H97V45H81Z" fill="url(#leadShade)" strokeWidth="1" />
      <path d="M53 0H81V45H53Z" fill="#464850" />
      <path d="M48 0V45M97 0V45" />
    </g>
  );
}

function Viewport() {
  return (
    <main className="flex-1 min-w-0 bg-[#3c3c3c]">
      <svg viewBox="501 188 1176 936" className="w-full h-full" role="img" aria-label="PCB">
        <defs>
          <linearGradient id="leadShade"><stop offset="0" stopColor="#8f96b3" /><stop offset="0.7" stopColor="#d4dbf6" /><stop offset="1" stopColor="#f2f4ff" /></linearGradient>
          <linearGradient id="bevelTop" x1="0" y1="0" x2="0" y2="1"><stop offset="0" stopColor="#74788c" /><stop offset="0.6" stopColor="#c0c6e2" /><stop offset="1" stopColor="#e2e7fb" /></linearGradient>
          <linearGradient id="bevelBottom" x1="0" y1="1" x2="0" y2="0"><stop offset="0" stopColor="#8c91ab" /><stop offset="0.6" stopColor="#c0c6e2" /><stop offset="1" stopColor="#e2e7fb" /></linearGradient>
          <linearGradient id="bevelLeft"><stop offset="0" stopColor="#8c91ab" /><stop offset="0.6" stopColor="#c6cce8" /><stop offset="1" stopColor="#f2f4ff" /></linearGradient>
          <linearGradient id="bevelRight" x1="1" x2="0" y1="0" y2="0"><stop offset="0" stopColor="#8c91ab" /><stop offset="0.6" stopColor="#c6cce8" /><stop offset="1" stopColor="#f2f4ff" /></linearGradient>
        </defs>
        <path d="M759 455H1639V1074H759Z" fill="#fff" stroke="#3fa750" strokeWidth="2" />
        <path d="M757 453h4v4h-4zM1637 453h4v4h-4zM757 1072h4v4h-4zM1637 1072h4v4h-4z" fill="#3fa750" />

        <rect x="954" y="629" width="490" height="428" rx="17" fill="#2c2d31" stroke="#161616" strokeWidth="2" />
        <path d="M971 629L985 643M954 645L969 659M1427 629L1413 643M1444 645L1430 659M971 1057L985 1043M954 1041L969 1026M1427 1057L1413 1043M1444 1041L1430 1026" stroke="#111" strokeWidth="2" />
        <rect x="969" y="643" width="461" height="400" rx="16" fill="#c9cfe9" />
        <path d="M985 643H1413V659H985Z" fill="url(#bevelTop)" />
        <path d="M985 1026H1413V1043H985Z" fill="url(#bevelBottom)" />
        <path d="M969 659H985V1026H969Z" fill="url(#bevelLeft)" />
        <path d="M1413 659H1430V1026H1413Z" fill="url(#bevelRight)" />
        <path d="M985 659H1413V1026H985Z" fill="#fff" />
        <rect x="969" y="643" width="461" height="400" rx="16" fill="none" stroke="#161616" strokeWidth="2" />
        <path d="M969 659H1430M969 1026H1430M985 643V1043M1413 643V1043" stroke="#161616" strokeWidth="2" />
        <circle cx="1021" cy="696" r="34" fill="none" stroke="#161616" strokeWidth="2" />

        <Lead x={810} y={679} />
        <Lead x={810} y={961} />
        <Lead x={1442} y={679} flip />
        <Lead x={1442} y={961} flip />

        <g transform="translate(1180 880) scale(0.333)" fill="none" stroke="#1c1c1c" strokeWidth="6">
          <path d="M105 318A65 65 0 0 1 130 193A74 74 0 0 1 265 213A55 55 0 0 1 253 318H232C214 312 216 294 232 294H253A30 30 0 0 0 247 236A56 56 0 0 0 142 223A40 42 0 0 0 103 290" />
          <path d="M178 304A38 38 0 1 1 168 278L220 250L233 271L178 300" />
          <circle cx="140" cy="304" r="16" />
        </g>
        <g fontFamily="'Noto Sans CJK SC', sans-serif" fontSize="25" fontWeight="500" fill="#333" stroke="#161616" strokeWidth="2">
          <text x="1294" y="958">LCEDA</text>
          <text x="1294" y="986">EasyEDA</text>
        </g>
      </svg>
    </main>
  );
}

export default function App() {
  return (
    <div className="relative h-screen overflow-hidden flex flex-col bg-[#323232] text-[18px] leading-6 font-['Noto_Sans','Noto_Sans_CJK_SC',sans-serif]">
      <MenuBar />

      <Toolbar>
        <Grip first />
        <Tool name="新建"><IconNew /></Tool>
        <Tool name="打开"><IconOpen /></Tool>
        <Tool name="保存"><IconSave /></Tool>
        <Grip />
        <Tool name="撤销"><IconUndo /></Tool>
        <Tool name="重做"><IconRedo /></Tool>
        <Divider />
        <Tool name="刷新"><IconRefresh /></Tool>
        <Grip />
        <div className="relative w-[250px] h-[37px] shrink-0">
          <select aria-label="工作台" className="appearance-none size-full pl-[37px] pt-1 border-2 border-black rounded-xs bg-linear-to-b from-[#2b2b2b] to-[#353535] text-white text-[15px] font-['Liberation_Mono',monospace]">
            <option>Part Design</option>
          </select>
          <svg viewBox="0 0 96 96" className="absolute left-[9px] top-2 size-[19px] pointer-events-none" aria-hidden="true"><BodyShape /></svg>
          <svg viewBox="0 0 10 5" className="absolute right-4 top-4 w-2.5 h-[5px] pointer-events-none" aria-hidden="true"><path d="M0 0H10L5 5Z" fill="#8c8c8c" /></svg>
        </div>
        <Grip />
        <Tool name="显示全部"><IconZoomFit /></Tool>
        <Tool name="显示选择"><IconZoomSelection /></Tool>
        <Tool name="等轴测"><IconIsoCube /></Tool>
        <More name="更多视图" />
        <Tool name="对齐"><IconAlign /></Tool>
        <Divider />
        <Tool name="显示样式"><IconDrawStyle /></Tool>
        <More name="更多样式" />
        <Tool name="框选"><IconBoxSelect /></Tool>
        <More name="更多选择" />
        <Tool name="同步视图"><IconZoomView /></Tool>
        <More name="更多缩放" />
        <Tool name="测量"><IconCaliper /></Tool>
      </Toolbar>

      <Toolbar>
        <Grip first />
        <Tool name="零件"><IconPart /></Tool>
        <Tool name="组"><IconGroup /></Tool>
        <Tool name="链接"><IconLink /></Tool>
        <More name="更多链接" />
        <Tool name="变量集"><IconVarSet /></Tool>
        <Grip />
        <Tool name="这是什么"><IconWhatsThis /></Tool>
        <Grip />
        <Tool name="实体"><IconBody /></Tool>
        <Tool name="草图"><IconSketch /></Tool>
        <More name="更多草图" />
        <Tool name="验证草图"><IconSketchCheck /></Tool>
        <Tool name="检查几何体"><IconCheckGeometry /></Tool>
        <Tool name="形状绑定"><IconShapeBinder /></Tool>
        <Tool name="克隆"><IconClone /></Tool>
        <Tool name="基准"><IconDatum /></Tool>
        <More name="更多基准" />
      </Toolbar>

      <Toolbar>
        <Grip first />
        <Tool name="凸台"><IconPad /></Tool>
        <Tool name="旋转体"><IconRevolution /></Tool>
        <Tool name="放样"><IconLoft body={YELLOW} line={RED} /></Tool>
        <Tool name="扫掠"><IconPipe body={YELLOW} line={RED} /></Tool>
        <Tool name="螺旋"><IconHelix body={YELLOW} /></Tool>
        <Tool name="添加图元"><IconPrimitive body={YELLOW} line={RED} /></Tool>
        <More name="更多添加图元" />
        <Divider />
        <Tool name="凹坑"><IconPocket /></Tool>
        <Tool name="孔"><IconHole /></Tool>
        <Tool name="凹槽"><IconGroove /></Tool>
        <Tool name="减料放样"><IconLoft body={RED} line={BLUE} /></Tool>
        <Tool name="减料扫掠"><IconPipe body={RED} line={BLUE} /></Tool>
        <Tool name="减料螺旋"><IconHelix body={BLUE} /></Tool>
        <Tool name="减料图元"><IconPrimitive body={RED} line={BLUE} /></Tool>
        <More name="更多减料图元" />
        <Divider />
        <Tool name="布尔"><IconBoolean /></Tool>
        <Grip />
        <Tool name="圆角"><IconFillet /></Tool>
        <Tool name="倒角"><IconChamfer /></Tool>
        <Tool name="拔模"><IconDraft /></Tool>
        <Tool name="抽壳"><IconThickness /></Tool>
        <Grip />
        <Tool name="镜像"><IconMirrored /></Tool>
        <Tool name="线性阵列"><IconLinearPattern /></Tool>
        <Tool name="环形阵列"><IconPolarPattern /></Tool>
        <Tool name="多重变换"><IconMultiTransform /></Tool>
      </Toolbar>

      <div className="flex-1 min-h-0 flex">
        <ModelPanel />
        <Viewport />
      </div>

      <ContextMenu />
      <div className="absolute left-0 top-[185px] w-[39px] h-[45px] border-3 border-[#ed1c24]" />
      <div className="absolute left-[81px] top-[320px] w-[150px] h-10 border-3 border-[#ed1c24]" />
      <div className="absolute right-1 bottom-3 text-[30px] leading-9 text-[#b9b9b9] font-['Liberation_Sans',sans-serif] [text-shadow:1px_2px_2px_#111]">CSDN @qlexcel</div>
    </div>
  );
}
